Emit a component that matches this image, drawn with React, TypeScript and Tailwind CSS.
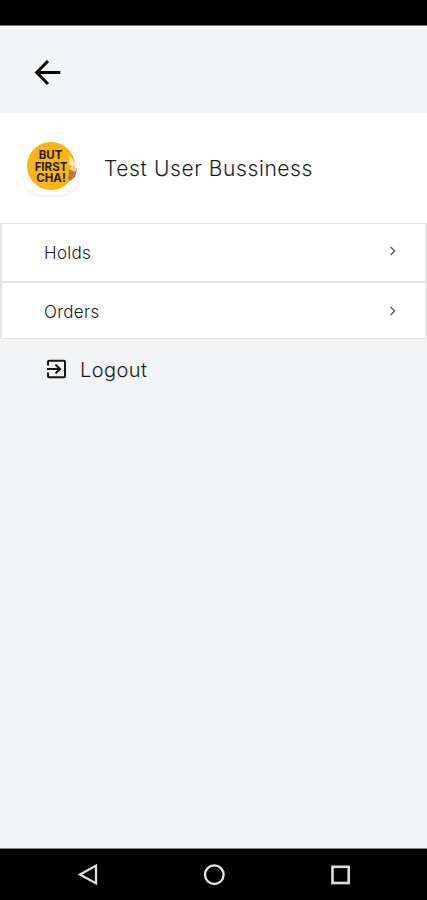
import React from 'react';

function BackArrow() {
  return (
    <svg width="28" height="28" viewBox="0 0 28 28" fill="none" stroke="#050505" strokeWidth="3" className="block">
      <path d="M27.3 14.5H4.5M15 3L3.7 14.5L15 26" />
    </svg>
  );
}

function Chevron() {
  return (
    <svg width="8" height="10" viewBox="0 0 8 10" fill="none" stroke="#5c5c5c" strokeWidth="1.4" className="block">
      <path d="M2.6 1L6.6 5L2.6 9" />
    </svg>
  );
}

function Avatar() {
  return (
    <div className="relative h-[53px] w-[56px] rounded-[20px] bg-white shadow-[0_2px_3px_rgba(0,0,0,0.06)]">
      <div className="absolute left-[4px] top-0 flex h-[48px] w-[48px] flex-col items-center justify-center rounded-full bg-[#fbb513] pt-[3px] font-['Inter',sans-serif] text-[11.5px] leading-[11.8px] font-bold text-[#26200b]">
        <span className="-ml-[1px]">BUT</span>
        <span>FIRST</span>
        <span>CHA!</span>
      </div>
      <svg width="16" height="28" viewBox="0 0 16 28" className="absolute left-[41px] top-[13px]">
        <path d="M6 10C1 8 9 6 4 1C11 4 8 7 12 9L10 12Z" fill="#fbe6b8" />
        <path d="M5 14L8 11L13 14L11 22L6 26L3.5 23L5 21Z" fill="#bd783b" />
        <path d="M5 14L8 11L13 14L11 17Z" fill="#efcfaa" />
      </svg>
    </div>
  );
}

export default function App() {
  return (
    <div className="flex h-[900px] w-[427px] flex-col overflow-hidden bg-[#f2f4f6] font-['Inter','Liberation_Sans',sans-serif] font-light text-[#1b1b1b]">
      <div className="h-[26px] shrink-0 border-b border-[#777777] bg-black" />
      <header className="h-[87px] shrink-0 border-t border-white pt-[31px] pl-[33px]">
        <BackArrow />
      </header>
      <section className="flex h-[110px] shrink-0 items-start bg-white pt-[29px] pl-[23px]">
        <Avatar />
        <h1 className="mt-[11px] ml-[25px] whitespace-nowrap text-[21px] leading-[32px] tracking-[0.6px]">Test User Bussiness</h1>
      </section>
      <nav className="shrink-0">
        <div className="flex h-[60px] justify-between border-2 border-t border-[#e5e5e6] bg-white pr-[29px] pl-[42px]">
          <span className="mt-[17px] text-[17px] leading-[24px] tracking-[0.3px]">Holds</span>
          <span className="mt-[22px]"><Chevron /></span>
        </div>
        <div className="flex h-[56px] justify-between border-x-2 border-b border-[#e5e5e6] bg-white pr-[29px] pl-[42px]">
          <span className="mt-[17px] text-[17px] leading-[24px] tracking-[0.3px]">Orders</span>
          <span className="mt-[23px]"><Chevron /></span>
        </div>
      </nav>
      <div className="flex grow items-start pt-[15px] pl-[46px]">
        <svg width="21" height="20" viewBox="0 0 21 20" fill="none" stroke="#171717" strokeWidth="2" className="mt-[5px] block">
          <path d="M2 6.5V2.8Q2 1.8 3 1.8H18Q19 1.8 19 2.8V17.2Q19 18.2 18 18.2H3Q2 18.2 2 17.2V13.5" />
          <path d="M1 10H13.5M9.5 5.5L14 10L9.5 14.5" />
        </svg>
        <span className="mt-[1px] ml-[13px] text-[20px] leading-[30px] tracking-[0.45px]">Logout</span>
      </div>
      <footer className="flex h-[52px] shrink-0 items-start border-t border-[#858585] bg-black pt-[14px] pl-[77px]">
        <svg width="22" height="24" viewBox="0 0 22 24" fill="none" stroke="#e0e0e0" strokeWidth="2.3" className="block">
          <path d="M19 2.6V20.4L3 11.5Z" />
        </svg>
        <svg width="24" height="24" viewBox="0 0 24 24" fill="none" stroke="#e5e5e5" strokeWidth="2.3" className="ml-[103px] block">
          <circle cx="12.3" cy="11.7" r="9.3" />
        </svg>
        <svg width="22" height="24" viewBox="0 0 22 24" fill="none" stroke="#dedede" strokeWidth="2.6" className="ml-[104px] block">
          <rect x="2.5" y="3.8" width="16.2" height="16.2" />
        </svg>
      </footer>
    </div>
  );
}
